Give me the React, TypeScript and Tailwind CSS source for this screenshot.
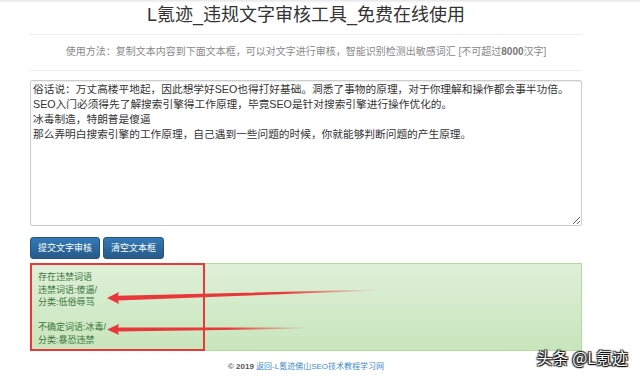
const SAMPLE_TEXT = [
  "俗话说：万丈高楼平地起，因此想学好SEO也得打好基础。洞悉了事物的原理，对于你理解和操作都会事半功倍。",
  "SEO入门必须得先了解搜索引擎得工作原理，毕竟SEO是针对搜索引擎进行操作优化的。",
  "冰毒制造，特朗普是傻逼",
  "那么弄明白搜索引擎的工作原理，自己遇到一些问题的时候，你就能够判断问题的产生原理。",
].join("\n");

function Arrows() {
  return (
    <svg
      className="pointer-events-none absolute left-0 top-0"
      width={640}
      height={379}
      viewBox="0 0 640 379"
    >
      <defs>
        <linearGradient id="fade1" gradientUnits="userSpaceOnUse" x1="107" y1="0" x2="378" y2="0">
          <stop offset="0" stopColor="#e8383a" />
          <stop offset="0.65" stopColor="#e8383a" />
          <stop offset="1" stopColor="#e8383a" stopOpacity="0" />
        </linearGradient>
        <linearGradient id="fade2" gradientUnits="userSpaceOnUse" x1="107" y1="0" x2="308" y2="0">
          <stop offset="0" stopColor="#e8383a" />
          <stop offset="0.6" stopColor="#e8383a" />
          <stop offset="1" stopColor="#e8383a" stopOpacity="0" />
        </linearGradient>
      </defs>
      <polygon
        points="107,298 119,292 118,295.8 378,289.4 378,290.6 118,300.4 119,304"
        fill="url(#fade1)"
      />
      <polygon
        points="107,329.5 119,324 118,327.6 308,327.4 308,328.6 118,331.6 119,335"
        fill="url(#fade2)"
      />
    </svg>
  );
}

export default function App() {
  return (
    <div className="relative h-[379px] w-[640px] overflow-hidden bg-white font-['Liberation_Sans','Noto_Sans_CJK_SC',sans-serif] text-[#333]">
      <div className="h-[3px] bg-gradient-to-b from-[#e6e6e6] to-white" />
      <div className="ml-[30px] w-[552px]">
        <h1 className="text-center text-[18px] leading-[24px] text-[#333]">
          L氪迹_违规文字审核工具_免费在线使用
        </h1>
        <div className="mt-[7px] border-t border-[#eeeeee]" />
        <p className="mt-[9px] text-center text-[10px] leading-[16px] text-[#888]">
          使用方法：复制文本内容到下面文本框，可以对文字进行审核，智能识别检测出敏感词汇 [不可超过
          <b className="text-[#777]">8000</b>汉字]
        </p>
        <div className="mt-[10px] border-t border-[#eeeeee]" />

        <textarea
          readOnly
          defaultValue={SAMPLE_TEXT}
          className="mt-[9px] block h-[146px] w-full rounded-[2px] border border-[#cccccc] px-[2px] py-[1px] font-['Liberation_Sans','Noto_Sans_CJK_SC',sans-serif] text-[10.7px] leading-[15px] text-[#333] shadow-[inset_0_1px_1px_rgba(0,0,0,0.08)] outline-none"
        />

        <div className="mt-[11px] flex gap-[3px]">
          <button className="h-[22px] rounded-[3px] border border-[#245580] bg-gradient-to-b from-[#337ab7] to-[#265a88] px-[7px] text-[9px] leading-[20px] text-white">
            提交文字审核
          </button>
          <button className="h-[22px] rounded-[3px] border border-[#245580] bg-gradient-to-b from-[#337ab7] to-[#265a88] px-[7px] text-[9px] leading-[20px] text-white">
            清空文本框
          </button>
        </div>

        <div className="mt-[4px] flex h-[88px] border border-[#b2dba1] bg-gradient-to-b from-[#dff0d8] to-[#c8e5bc]">
          <div className="-my-px -ml-px w-[175px] border-2 border-[#e8383a] pl-[6px] pt-[6px] text-[9px] leading-[12.5px] text-[#3c763d]">
            <div>存在违禁词语</div>
            <div>违禁词语:傻逼/</div>
            <div>分类:低俗辱骂</div>
            <div className="h-[12.5px]" />
            <div>不确定词语:冰毒/</div>
            <div>分类:暴恐违禁</div>
          </div>
        </div>

        <p className="mt-[10px] text-center text-[8px] leading-[12px]">
          <span className="font-bold text-[#555]">© 2019 </span>
          <a className="text-[#428bca]">返回-L氪迹佛山SEO技术教程学习网</a>
        </p>
      </div>

      <Arrows />

      <div className="absolute right-[12px] top-[347px] font-['Noto_Sans_CJK_SC',sans-serif] text-[16px] leading-[20px] text-white [text-shadow:0_0_1px_#000,1px_1px_1px_#000,-1px_-1px_1px_#333,1px_-1px_1px_#333,-1px_1px_1px_#333]">
        头条 @L氪迹
      </div>
    </div>
  );
}
